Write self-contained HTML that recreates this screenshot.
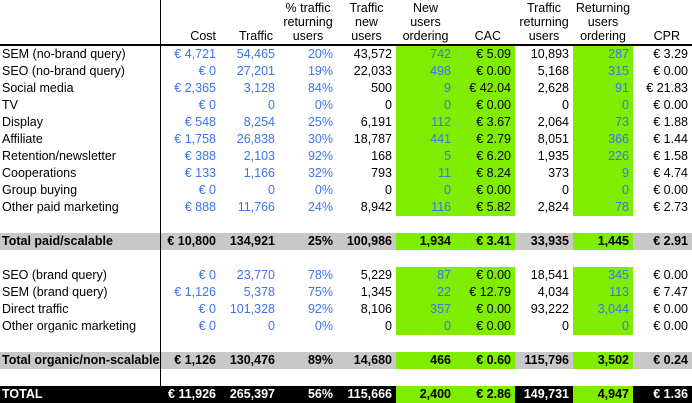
<!DOCTYPE html>
<html><head><meta charset="utf-8"><style>
body{margin:0;width:692px;height:403px;overflow:hidden;background:#fff;font-family:"Liberation Sans",Arial,sans-serif;font-size:12.5px;color:#000}
table{border-collapse:collapse;table-layout:fixed;width:692px;position:absolute;left:0;top:0}
td{padding:0 4px 0 0;text-align:right;height:17px;line-height:17px;white-space:nowrap;overflow:visible}
td.l{text-align:left;padding-left:2px;border-right:1px solid #000}
tr.h td{height:43px;vertical-align:bottom;text-align:center;line-height:14px;padding:0 0 1px 0;border-bottom:2px solid #000}
tr.h td.l{border-bottom:2px solid #000}
.b{color:#3a74f0}
.g{background:#80ec00}
tr.t td{background:#c8c8c8;font-weight:bold}
tr.t td.g{background:#80ec00}
tr.T td{background:#000;color:#fff;font-weight:bold;border-right:none}
tr.T td.g{background:#80ec00;color:#000}
</style></head><body>
<table>
<colgroup><col style="width:160px"><col style="width:60px"><col style="width:59px"><col style="width:58px"><col style="width:59px"><col style="width:59px"><col style="width:60px"><col style="width:58px"><col style="width:60px"><col style="width:59px"></colgroup>
<tr class="h"><td class="l"></td><td style="text-align:right;padding-right:4px">Cost</td><td style="text-align:right;padding-right:6px">Traffic</td><td>% traffic<br>returning<br>users</td><td>Traffic<br>new<br>users</td><td>New<br>users<br>ordering</td><td style="text-align:right;padding-right:14px">CAC</td><td>Traffic<br>returning<br>users</td><td>Returning<br>users<br>ordering</td><td style="text-align:right;padding-right:12px">CPR</td></tr>
<tr><td class="l">SEM (no-brand query)</td><td class="b">€ 4,721</td><td class="b">54,465</td><td class="b">20%</td><td>43,572</td><td class="g b">742</td><td class="g">€ 5.09</td><td>10,893</td><td class="g b">287</td><td>€ 3.29</td></tr>
<tr><td class="l">SEO (no-brand query)</td><td class="b">€ 0</td><td class="b">27,201</td><td class="b">19%</td><td>22,033</td><td class="g b">498</td><td class="g">€ 0.00</td><td>5,168</td><td class="g b">315</td><td>€ 0.00</td></tr>
<tr><td class="l">Social media</td><td class="b">€ 2,365</td><td class="b">3,128</td><td class="b">84%</td><td>500</td><td class="g b">9</td><td class="g">€ 42.04</td><td>2,628</td><td class="g b">91</td><td>€ 21.83</td></tr>
<tr><td class="l">TV</td><td class="b">€ 0</td><td class="b">0</td><td class="b">0%</td><td>0</td><td class="g b">0</td><td class="g">€ 0.00</td><td>0</td><td class="g b">0</td><td>€ 0.00</td></tr>
<tr><td class="l">Display</td><td class="b">€ 548</td><td class="b">8,254</td><td class="b">25%</td><td>6,191</td><td class="g b">112</td><td class="g">€ 3.67</td><td>2,064</td><td class="g b">73</td><td>€ 1.88</td></tr>
<tr><td class="l">Affiliate</td><td class="b">€ 1,758</td><td class="b">26,838</td><td class="b">30%</td><td>18,787</td><td class="g b">441</td><td class="g">€ 2.79</td><td>8,051</td><td class="g b">366</td><td>€ 1.44</td></tr>
<tr><td class="l">Retention/newsletter</td><td class="b">€ 388</td><td class="b">2,103</td><td class="b">92%</td><td>168</td><td class="g b">5</td><td class="g">€ 6.20</td><td>1,935</td><td class="g b">226</td><td>€ 1.58</td></tr>
<tr><td class="l">Cooperations</td><td class="b">€ 133</td><td class="b">1,166</td><td class="b">32%</td><td>793</td><td class="g b">11</td><td class="g">€ 8.24</td><td>373</td><td class="g b">9</td><td>€ 4.74</td></tr>
<tr><td class="l">Group buying</td><td class="b">€ 0</td><td class="b">0</td><td class="b">0%</td><td>0</td><td class="g b">0</td><td class="g">€ 0.00</td><td>0</td><td class="g b">0</td><td>€ 0.00</td></tr>
<tr><td class="l">Other paid marketing</td><td class="b">€ 888</td><td class="b">11,766</td><td class="b">24%</td><td>8,942</td><td class="g b">116</td><td class="g">€ 5.82</td><td>2,824</td><td class="g b">78</td><td>€ 2.73</td></tr>
<tr><td class="l"></td><td></td><td></td><td></td><td></td><td></td><td></td><td></td><td></td><td></td></tr>
<tr class="t"><td class="l">Total paid/scalable</td><td>€ 10,800</td><td>134,921</td><td>25%</td><td>100,986</td><td class="g">1,934</td><td class="g">€ 3.41</td><td>33,935</td><td class="g">1,445</td><td>€ 2.91</td></tr>
<tr><td class="l"></td><td></td><td></td><td></td><td></td><td></td><td></td><td></td><td></td><td></td></tr>
<tr><td class="l">SEO (brand query)</td><td class="b">€ 0</td><td class="b">23,770</td><td class="b">78%</td><td>5,229</td><td class="g b">87</td><td class="g">€ 0.00</td><td>18,541</td><td class="g b">345</td><td>€ 0.00</td></tr>
<tr><td class="l">SEM (brand query)</td><td class="b">€ 1,126</td><td class="b">5,378</td><td class="b">75%</td><td>1,345</td><td class="g b">22</td><td class="g">€ 12.79</td><td>4,034</td><td class="g b">113</td><td>€ 7.47</td></tr>
<tr><td class="l">Direct traffic</td><td class="b">€ 0</td><td class="b">101,328</td><td class="b">92%</td><td>8,106</td><td class="g b">357</td><td class="g">€ 0.00</td><td>93,222</td><td class="g b">3,044</td><td>€ 0.00</td></tr>
<tr><td class="l">Other organic marketing</td><td class="b">€ 0</td><td class="b">0</td><td class="b">0%</td><td>0</td><td class="g b">0</td><td class="g">€ 0.00</td><td>0</td><td class="g b">0</td><td>€ 0.00</td></tr>
<tr><td class="l"></td><td></td><td></td><td></td><td></td><td></td><td></td><td></td><td></td><td></td></tr>
<tr class="t"><td class="l">Total organic/non-scalable</td><td>€ 1,126</td><td>130,476</td><td>89%</td><td>14,680</td><td class="g">466</td><td class="g">€ 0.60</td><td>115,796</td><td class="g">3,502</td><td>€ 0.24</td></tr>
<tr><td class="l"></td><td></td><td></td><td></td><td></td><td></td><td></td><td></td><td></td><td></td></tr>
<tr class="T"><td class="l">TOTAL</td><td>€ 11,926</td><td>265,397</td><td>56%</td><td>115,666</td><td class="g">2,400</td><td class="g">€ 2.86</td><td>149,731</td><td class="g">4,947</td><td>€ 1.36</td></tr>
</table>
</body></html>
